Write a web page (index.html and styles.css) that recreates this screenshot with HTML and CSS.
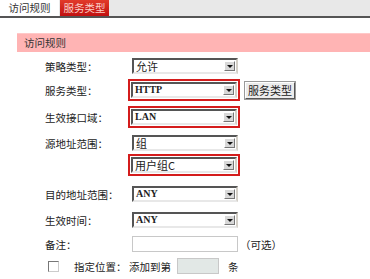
FILE: index.html
```html
<!DOCTYPE html>
<html lang="zh-CN">
<head>
  <meta charset="UTF-8">
  <title>访问规则</title>
  <link rel="stylesheet" href="styles.css">
</head>
<body>
  <div class="tabs">
    <div class="tab">访问规则</div>
    <div class="tab active">服务类型</div>
  </div>
  <div class="panel">
    <div class="panel-title">访问规则</div>
    <div class="form">
      <div class="row r1">
        <span class="label">策略类型：</span>
        <div class="select"><span class="val cn">允许</span><span class="arrow"></span></div>
      </div>
      <div class="row r2">
        <span class="label">服务类型：</span>
        <div class="mark"><div class="select"><span class="val">HTTP</span><span class="arrow"></span></div></div>
        <button class="btn">服务类型</button>
      </div>
      <div class="row r3">
        <span class="label">生效接口域：</span>
        <div class="mark"><div class="select"><span class="val">LAN</span><span class="arrow"></span></div></div>
      </div>
      <div class="row r4">
        <span class="label">源地址范围：</span>
        <div class="select"><span class="val cn">组</span><span class="arrow"></span></div>
      </div>
      <div class="row r5">
        <span class="label"></span>
        <div class="mark"><div class="select"><span class="val cn">用户组C</span><span class="arrow"></span></div></div>
      </div>
      <div class="row r6">
        <span class="label">目的地址范围：</span>
        <div class="select"><span class="val">ANY</span><span class="arrow"></span></div>
      </div>
      <div class="row r7">
        <span class="label">生效时间：</span>
        <div class="select"><span class="val">ANY</span><span class="arrow"></span></div>
      </div>
      <div class="row r8">
        <span class="label">备注：</span>
        <input class="text" type="text">
        <span class="hint">（可选）</span>
      </div>
      <div class="row r9">
        <span class="check"></span>
        <span class="pos-label">指定位置：</span>
        <span class="add">添加到第</span>
        <input class="text small" type="text" disabled>
        <span class="unit">条</span>
      </div>
    </div>
  </div>
</body>
</html>
```

FILE: styles.css
```css
body {
  margin: 0;
  font-family: "Noto Sans CJK SC", "DejaVu Sans", sans-serif;
  font-size: 10.5px;
  color: #222;
  background: #fff;
  width: 370px;
  height: 279px;
  overflow: hidden;
}
.tabs {
  display: flex;
  height: 16px;
  background: #e8e8e8;
  border-bottom: 2px solid #555;
}
.tab {
  width: 59px;
  line-height: 16px;
  text-align: center;
  background: #fff;
  color: #333;
}
.tab.active {
  width: 49px;
  margin-left: 1px;
  background: linear-gradient(#e23a2a, #c01010);
  color: #fbd0c8;
}
.panel {
  padding: 15px 0 0 17px;
}
.panel-title {
  height: 18px;
  line-height: 18px;
  padding-left: 7px;
  background: #ffb4b4;
  border-top: 1px solid #ffc8c8;
  color: #333;
}
.form {
  padding-left: 28px;
}
.row {
  display: flex;
  align-items: center;
  height: 22px;
  white-space: nowrap;
}
.r1 { margin-top: 3px; }
.r2 { margin-top: 2px; }
.r3 { margin-top: 5px; }
.r4 { margin-top: 4px; }
.r5 { margin-top: 0; }
.r6 { margin-top: 7px; }
.r7 { margin-top: 4px; }
.r8 { margin-top: 2px; }
.r9 { margin-top: 0; }
.label {
  width: 86px;
  flex: none;
}
.select {
  display: flex;
  align-items: center;
  justify-content: space-between;
  width: 102px;
  height: 12px;
  margin-left: 1px;
  border: 2px solid;
  border-color: #555 #d4d0c8 #e8e8e8 #555;
  background: #fff;
  font-family: "Liberation Serif", serif;
  font-size: 10px;
  font-weight: bold;
}
.mark .select {
  margin-left: 0;
}
.val {
  padding-left: 2px;
  line-height: 12px;
}
.val.cn {
  font-family: "Noto Sans CJK SC", sans-serif;
  font-weight: normal;
  font-size: 11px;
}
.arrow {
  position: relative;
  width: 11px;
  height: 10px;
  margin-right: 1px;
  background: #d8d8d8;
  border: 1px solid;
  border-color: #fff #777 #777 #fff;
  box-sizing: border-box;
}
.arrow::after {
  content: "";
  position: absolute;
  left: 2px;
  top: 3px;
  border-left: 3px solid transparent;
  border-right: 3px solid transparent;
  border-top: 3px solid #111;
}
.mark {
  margin-left: -3px;
  padding: 1px;
  border: 2px solid #d41c1c;
}
.btn {
  margin-left: 5px;
  height: 17px;
  padding: 0 2px;
  font-family: inherit;
  font-size: 11px;
  line-height: 13px;
  color: #222;
  background: #ececec;
  border: 1px solid;
  border-color: #fff #555 #555 #fff;
  outline: 1px solid #999;
}
.text {
  width: 102px;
  height: 12px;
  margin: 0 0 0 1px;
  padding: 1px;
  border: 1px solid #c8c8c8;
  background: #fff;
}
.hint {
  margin-left: 2px;
}
.check {
  flex: none;
  width: 9px;
  height: 9px;
  margin-left: 3px;
  border: 1px solid;
  border-color: #777 #ccc #ccc #777;
}
.pos-label {
  margin-left: 15px;
  width: 55px;
  flex: none;
}
.text.small {
  width: 38px;
  margin-left: 6px;
  background: #e2e8e6;
}
.unit {
  margin-left: 9px;
}
```
